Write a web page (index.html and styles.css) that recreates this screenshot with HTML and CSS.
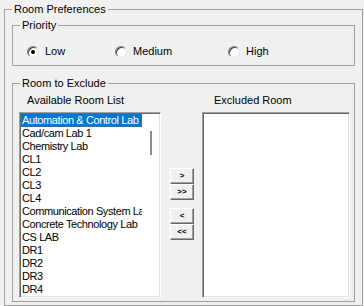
FILE: index.html
```html
<!DOCTYPE html>
<html lang="en">
<head>
  <meta charset="UTF-8" />
  <title>Room Preferences</title>
  <link rel="stylesheet" href="styles.css">
</head>
<body>
  <fieldset class="group group-main">
    <legend>Room Preferences</legend>

    <fieldset class="group group-priority">
      <legend>Priority</legend>
      <div class="radio-row">
        <label class="radio radio-low"><span class="radio-mark checked"></span>Low</label>
        <label class="radio radio-medium"><span class="radio-mark"></span>Medium</label>
        <label class="radio"><span class="radio-mark"></span>High</label>
      </div>
    </fieldset>

    <fieldset class="group group-rooms">
      <legend>Room to Exclude</legend>
      <div class="lists">
        <div class="column">
          <div class="column-title title-available">Available Room List</div>
          <div class="listbox listbox-available">
            <ul class="items">
              <li class="item selected">Automation &amp; Control Lab</li>
              <li class="item">Cad/cam Lab 1</li>
              <li class="item">Chemistry Lab</li>
              <li class="item">CL1</li>
              <li class="item">CL2</li>
              <li class="item">CL3</li>
              <li class="item">CL4</li>
              <li class="item">Communication System Lab</li>
              <li class="item">Concrete Technology Lab</li>
              <li class="item">CS LAB</li>
              <li class="item">DR1</li>
              <li class="item">DR2</li>
              <li class="item">DR3</li>
              <li class="item">DR4</li>
            </ul>
            <div class="scrollbar"><div class="thumb"></div></div>
          </div>
        </div>

        <div class="buttons">
          <button class="move">&gt;</button>
          <button class="move">&gt;&gt;</button>
          <button class="move move-back">&lt;</button>
          <button class="move">&lt;&lt;</button>
        </div>

        <div class="column">
          <div class="column-title title-excluded">Excluded Room</div>
          <div class="listbox listbox-excluded"></div>
        </div>
      </div>
    </fieldset>
  </fieldset>
</body>
</html>
```

FILE: styles.css
```css
body {
  margin: 0;
  padding: 0;
  background: #f0f0f0;
  font-family: "Liberation Sans", Arial, sans-serif;
  font-size: 11px;
  line-height: 13px;
  color: #000;
  overflow: hidden;
}

.group {
  margin: 0;
  padding: 0 6px 0 7px;
  border: 1px solid #a0a0a0;
  min-inline-size: 0;
}

.group legend {
  padding: 0 2px;
  line-height: 13px;
}

.group-main {
  margin: 3px 0 0 4px;
  width: 359px;
  height: 303px;
  box-sizing: border-box;
}

.group-priority {
  margin-top: 3px;
  width: 343px;
  box-sizing: border-box;
  padding-top: 13px;
  padding-bottom: 7px;
}

.radio-row {
  display: flex;
  padding-left: 7px;
}

.radio {
  display: flex;
  align-items: center;
  height: 13px;
}

.radio-low {
  width: 88px;
}

.radio-medium {
  width: 113px;
}

.radio-mark {
  position: relative;
  width: 12px;
  height: 12px;
  margin-right: 6px;
  box-sizing: border-box;
  border-radius: 50%;
  border: 1px solid;
  border-color: #808080 #e8e8e8 #e8e8e8 #808080;
  box-shadow: inset 1px 1px 0 #404040;
  background: #fff;
}

.radio-mark.checked::after {
  content: "";
  position: absolute;
  left: 3px;
  top: 3px;
  width: 4px;
  height: 4px;
  border-radius: 50%;
  background: #000;
}

.group-rooms {
  margin-top: 11px;
  width: 343px;
  box-sizing: border-box;
  padding: 4px 6px 3px 6px;
}

.group-rooms legend {
  margin-left: 1px;
}

.lists {
  display: flex;
  align-items: flex-start;
}

.column-title {
  height: 13px;
  margin-bottom: 5px;
  white-space: nowrap;
}

.title-available {
  padding-left: 8px;
}

.title-excluded {
  padding-left: 12px;
}

.listbox {
  box-sizing: border-box;
  height: 186px;
  background: #fff;
  border: 1px solid;
  border-color: #a0a0a0 #fff #fff #a0a0a0;
  box-shadow: inset 1px 1px 0 #696969, inset -1px -1px 0 #e3e3e3;
  overflow: hidden;
}

.listbox-available {
  width: 142px;
  display: flex;
  padding: 1px;
}

.listbox-excluded {
  width: 148px;
}

.items {
  list-style: none;
  margin: 0;
  padding: 0;
  flex: 1;
  min-width: 0;
}

.item {
  height: 13px;
  padding-left: 1px;
  white-space: nowrap;
  overflow: hidden;
  letter-spacing: -0.4px;
}

.item.selected {
  background: #0078d7;
  color: #fff;
}

.scrollbar {
  width: 17px;
  flex-shrink: 0;
}

.thumb {
  width: 2px;
  height: 24px;
  margin: 17px 0 0 8px;
  background: #8b8b8b;
}

.buttons {
  display: flex;
  flex-direction: column;
  margin: 74px 8px 0 9px;
}

.move {
  width: 24px;
  height: 16px;
  margin: 0;
  padding: 0;
  box-sizing: border-box;
  background: #f0f0f0;
  border: 1px solid;
  border-color: #fff #696969 #696969 #fff;
  box-shadow: inset -1px -1px 0 #a0a0a0;
  font-family: "Liberation Sans", Arial, sans-serif;
  font-size: 8px;
  font-weight: bold;
  line-height: 12px;
  color: #000;
}

.move-back {
  margin-top: 8px;
}
```
